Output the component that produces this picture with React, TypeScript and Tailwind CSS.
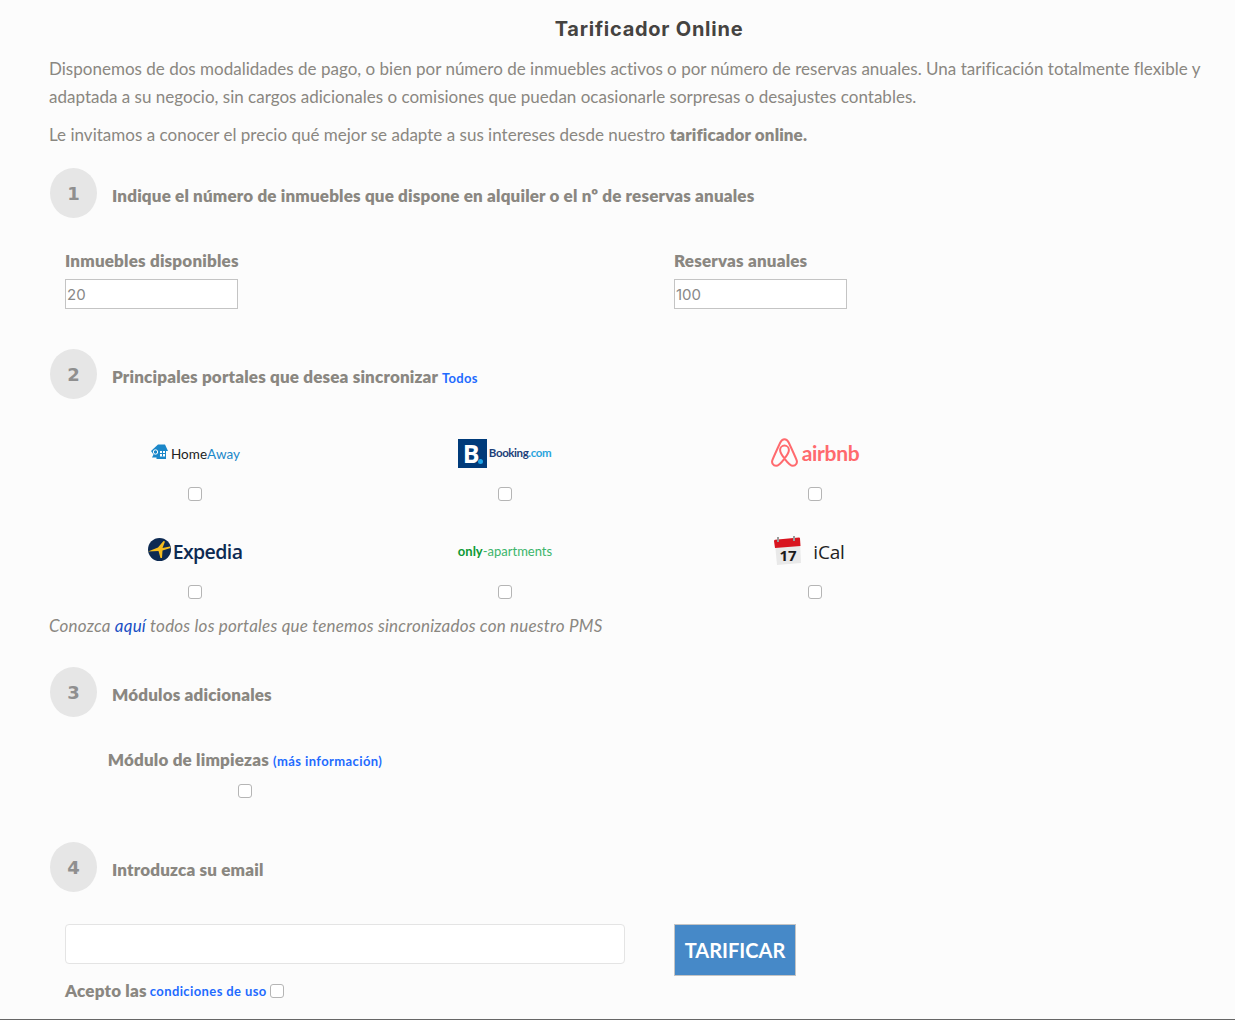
const gris = "text-[#8a8781]";

function Paso({ n, children }: { n: number; children: React.ReactNode }) {
  return (
    <div className="flex items-center pl-[50px]">
      <div className="flex h-[50px] w-[47px] items-center justify-center rounded-[50%] bg-[#e6e6e6] pt-[1px] font-['DejaVu_Sans'] text-[18px] font-bold text-[#8f8f8f]">
        {n}
      </div>
      <div className={`ml-[15px] mt-[6px] text-[17px] font-extrabold tracking-[0.17px] ${gris}`}>
        {children}
      </div>
    </div>
  );
}

function Marca({ className }: { className?: string }) {
  return (
    <input
      type="checkbox"
      className={`block h-[14px] w-[14px] appearance-none rounded-[3px] border border-[#b5b5b5] bg-white ${className ?? ""}`}
    />
  );
}

function HomeAway() {
  return (
    <div className="flex items-center">
      <svg width="19" height="19" viewBox="0 0 19 19" className="-mt-[3px]">
        <path d="M1 8 8 1.500h7l3 6.500h-2v8H6.500v-1.500H2l1.500-3Z" fill="#1b87c9" />
        <rect x="10" y="8" width="5" height="5.500" fill="#fff" />
        <path d="M12.500 8v5.500M10 10.500h5" stroke="#1b87c9" />
        <circle cx="5.500" cy="9" r="2.200" fill="none" stroke="#fff" />
      </svg>
      <span className="ml-[2px] mt-[2px] text-[13.5px] tracking-[0.05px] text-[#222]">Home</span>
      <span className="mt-[2px] text-[13.5px] tracking-[0.05px] text-[#1b87c9]">Away</span>
    </div>
  );
}

function Booking() {
  return (
    <div className="-ml-[1px] flex items-center">
      <div className="relative flex h-[29px] w-[29px] items-center bg-[#003b7a] pl-[5px] font-['Open_Sans'] text-[25px] font-bold text-white">
        B
        <span className="absolute bottom-[4px] right-[4px] h-[5px] w-[5px] rounded-full bg-[#1ba3e8]" />
      </div>
      <span className="ml-[2px] -mt-[1px] text-[11.5px] font-bold tracking-[-0.4px] text-[#1d3f78]">Booking</span>
      <span className="-mt-[1px] text-[11.5px] font-bold tracking-[-0.4px] text-[#2aa5dc]">.com</span>
    </div>
  );
}

function Airbnb() {
  return (
    <div className="-mt-[2px] flex items-center gap-[4px]">
      <svg width="27" height="29" viewBox="0 0 27 29" fill="none" stroke="#ff6a6e" strokeWidth="2">
        <path d="M13.500 20.500c-2.800-3.400-4.400-6.200-4.400-8.500a4.400 4.400 0 0 1 8.800 0c0 2.300-1.600 5.100-4.400 8.500Zm0 0c-3 4-5.400 7.300-8.400 7.300-2.900 0-4.800-2.800-3.700-5.700C3 18 6.500 10.500 9.300 4.500 10.300 2.300 11.700 1.200 13.500 1.200s3.200 1.100 4.200 3.300C20.500 10.500 24 18 25.600 22.100c1.100 2.900-.8 5.700-3.700 5.700-3 0-5.400-3.300-8.400-7.300Z" />
      </svg>
      <span className="font-['Lato'] text-[21px] font-bold leading-none tracking-[-0.3px] text-[#ff6a6e]">airbnb</span>
    </div>
  );
}

function Expedia() {
  return (
    <div className="flex items-center">
      <svg width="23" height="23" viewBox="0 0 23 23" className="-mt-[5px]">
        <circle cx="11.500" cy="11.500" r="11.500" fill="#0d2a52" />
        <path d="M0 13.500 10 9.500 15.500 3 17 3.500 14.500 10 22 8.500 22.500 10 14.500 12.500 14 20 12.500 20 10.500 13Z" fill="#f5bd1f" />
      </svg>
      <span className="ml-[2px] font-['Open_Sans'] text-[19.5px] font-semibold leading-none tracking-[-0.6px] text-[#0d2a52]">Expedia</span>
    </div>
  );
}

function OnlyApartments() {
  return (
    <div className="text-[13px] leading-none">
      <span className="font-bold text-[#0d9a35]">only</span>
      <span className="text-[#3bb56a]">-apartments</span>
    </div>
  );
}

function Ical() {
  return (
    <div className="flex items-center pr-[12px]">
      <svg width="30" height="30" viewBox="0 0 30 30" className="-mt-[2px]">
        <path d="M2 8 27 6l1 21-24 2Z" fill="#e9e9e9" />
        <path d="M1 5q0-1 1-1.200L26 1.500q1 0 1 1L27.500 10 2 12Z" fill="#d8141f" />
        <path d="M5 1v5M21 0v5" stroke="#9a9a9a" strokeWidth="2" />
        <text x="15" y="25" textAnchor="middle" fontSize="15" fontWeight="700" fontFamily="Open Sans" fill="#1a1a1a">17</text>
      </svg>
      <span className="ml-[10px] mt-[1px] font-['Open_Sans'] text-[19px] leading-none tracking-[-0.2px] text-[#222]">iCal</span>
    </div>
  );
}

const portales = [
  { id: "homeaway", logo: <HomeAway /> },
  { id: "booking", logo: <Booking /> },
  { id: "airbnb", logo: <Airbnb /> },
  { id: "expedia", logo: <Expedia /> },
  { id: "only", logo: <OnlyApartments /> },
  { id: "ical", logo: <Ical /> },
];

export default function App() {
  return (
    <div className={`h-[1020px] overflow-hidden border-b border-[#666] bg-[#fcfcfc] font-['Lato',sans-serif] ${gris}`}>
      <h1 className="pl-[63px] pt-[16px] text-center font-['Inter'] text-[20px] font-bold leading-[26px] tracking-[0.75px] text-[#454341]">
        Tarificador Online
      </h1>

      <div className="pl-[49px] pr-[30px] pt-[13px] text-[17px] leading-[28px] tracking-[0.01px]">
        <p>
          Disponemos de dos modalidades de pago, o bien por número de inmuebles activos o por número de reservas anuales. Una tarificación totalmente flexible y adaptada a su negocio, sin cargos adicionales o comisiones que puedan ocasionarle sorpresas o desajustes contables.
        </p>
        <p className="mt-[10px]">
          Le invitamos a conocer el precio qué mejor se adapte a sus intereses desde nuestro <b className="font-extrabold tracking-[0.11px]">tarificador online.</b>
        </p>
      </div>

      <div className="mt-[19px]">
        <Paso n={1}>Indique el número de inmuebles que dispone en alquiler o el nº de reservas anuales</Paso>
      </div>

      <div className="mt-[24px] flex pl-[65px]">
        <div className="w-[609px]">
          <label className="block text-[17px] font-extrabold leading-[37px] tracking-[0.19px]">Inmuebles disponibles</label>
          <input defaultValue="20" className="block h-[30px] w-[173px] border border-[#c4c4c4] bg-white pl-[1px] font-['Inter'] text-[15px] text-[#888] outline-none" />
        </div>
        <div>
          <label className="block text-[17px] font-extrabold leading-[37px] tracking-[0.19px]">Reservas anuales</label>
          <input defaultValue="100" className="block h-[30px] w-[173px] border border-[#c4c4c4] bg-white pl-[1px] font-['Inter'] text-[15px] text-[#888] outline-none" />
        </div>
      </div>

      <div className="mt-[40px]">
        <Paso n={2}>
          Principales portales que desea sincronizar{" "}
          <a className="text-[13px] font-bold tracking-[0.3px] text-[#1f6bff]">Todos</a>
        </Paso>
      </div>

      <div className="mt-[24px] grid w-[970px] grid-cols-[310px_310px_310px] pl-[40px]">
        {portales.map((p) => (
          <div key={p.id} className="flex h-[98px] flex-col items-center">
            <div className="flex h-[60px] items-center justify-center pt-[1px]">{p.logo}</div>
            <Marca className="mt-[4px]" />
          </div>
        ))}
      </div>

      <p className="-mt-[7px] pl-[49px] text-[17px] italic leading-[28px] tracking-[0.21px]">
        Conozca <a className="text-[#1a4fc4]">aquí</a> todos los portales que tenemos sincronizados con nuestro PMS
      </p>

      <div className="mt-[27px]">
        <Paso n={3}>Módulos adicionales</Paso>
      </div>

      <div className="mt-[24px] w-[390px] pl-[100px] text-center">
        <div className="text-[17px] font-extrabold leading-[38px] tracking-[0.19px]">
          Módulo de limpiezas <a className="text-[13px] font-bold tracking-[0.4px] text-[#1f6bff]">(más información)</a>
        </div>
        <Marca className="mx-auto mt-[4px]" />
      </div>

      <div className="mt-[44px]">
        <Paso n={4}>Introduzca su email</Paso>
      </div>

      <div className="mt-[32px] flex pl-[65px]">
        <div className="w-[609px]">
          <input className="block h-[40px] w-[560px] rounded-[4px] border border-[#e4e4e4] bg-white outline-none" />
          <div className="mt-[11px] flex items-center text-[17px] font-extrabold leading-[32px] tracking-[0.19px]">
            Acepto las
            <a className="ml-[3px] text-[13px] font-bold tracking-[0.4px] text-[#1f6bff]">condiciones de uso</a>
            <Marca className="ml-[3px]" />
          </div>
        </div>
        <button className="h-[52px] w-[122px] border border-[#c4c4c4] bg-[#4689c8] text-[20px] font-bold text-white">
          TARIFICAR
        </button>
      </div>
    </div>
  );
}
